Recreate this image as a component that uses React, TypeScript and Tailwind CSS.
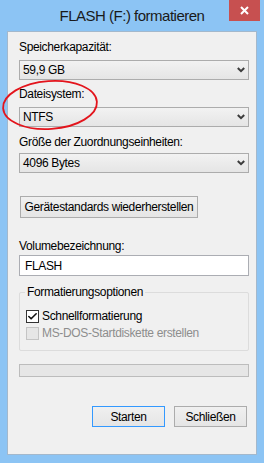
import { Check } from "lucide-react";

const font = { fontFamily: '"Liberation Sans", Arial, sans-serif' };

const Chevron = () => (
  <svg width="8" height="6" viewBox="0 0 8 6" className="shrink-0">
    <polyline points="0.8,1 4,4.2 7.2,1" fill="none" stroke="#3c3c3c" strokeWidth="2" />
  </svg>
);

type ComboProps = { value: string };

const Combo = ({ value }: ComboProps) => (
  <div className="flex h-[20px] items-center justify-between border border-[#acacac] bg-gradient-to-b from-[#f2f2f2] to-[#e5e5e5] pl-[3px] pr-[3px]">
    <span className="whitespace-nowrap text-[12px] leading-none text-black">{value}</span>
    <Chevron />
  </div>
);

const Label = ({ children, className }: { children: string; className?: string }) => (
  <div className={"h-[15px] whitespace-nowrap text-[12px] leading-[15px] text-black " + (className ?? "")}>{children}</div>
);

export default function App() {
  return (
    <div className="relative flex h-[463px] w-[264px] flex-col bg-[#8cc4f4] tracking-[-0.35px]" style={font}>
      {/* title bar */}
      <div className="relative flex h-[31px] shrink-0 items-center justify-center">
        <span className="whitespace-nowrap pb-[1px] text-[15px] leading-none tracking-[-0.5px] text-[#1a1a1a]">FLASH (F:) formatieren</span>
        <div className="absolute right-[4px] top-0 flex h-[21px] w-[31px] items-center justify-center bg-[#c75050]">
          <svg width="9" height="9" viewBox="0 0 9 9">
            <path d="M1 1L8 8M8 1L1 8" stroke="#fff" strokeWidth="2" />
          </svg>
        </div>
      </div>

      {/* client area */}
      <div className="mx-[7px] flex h-[424px] flex-col border border-[#a3b8cc] bg-[#f0f0f0] pl-[11px] pr-[7px]">
        <Label className="mt-[8px]">Speicherkapazität:</Label>
        <div className="mt-[5px]">
          <Combo value="59,9 GB" />
        </div>
        <Label className="mt-[7px]">Dateisystem:</Label>
        <div className="mt-[5px]">
          <Combo value="NTFS" />
        </div>
        <Label className="mt-[8px]">Größe der Zuordnungseinheiten:</Label>
        <div className="mt-[3px]">
          <Combo value="4096 Bytes" />
        </div>

        <div className="mt-[23px] flex">
          <button className="ml-[1px] flex h-[22px] w-[178px] items-center justify-center whitespace-nowrap border border-[#acacac] bg-gradient-to-b from-[#f0f0f0] to-[#e5e5e5] text-[12px] leading-none text-black">
            Gerätestandards wiederherstellen
          </button>
        </div>

        <Label className="mt-[21px]">Volumebezeichnung:</Label>
        <div className="mt-[1px] flex h-[21px] items-center border border-[#abadb3] bg-white pl-[5px] text-[12px] leading-none text-black">
          FLASH
        </div>

        {/* group box */}
        <div className="relative mt-[16px] h-[59px] rounded-[2px] border border-[#dcdcdc] pl-[6px] pt-[16px]">
          <span className="absolute -top-[8px] left-[5px] whitespace-nowrap bg-[#f0f0f0] px-[2px] text-[12px] leading-[15px] text-black">
            Formatierungsoptionen
          </span>
          <div className="flex h-[14px] items-center gap-[3px]">
            <div className="flex h-[13px] w-[13px] items-center justify-center border border-[#333] bg-white">
              <Check size={11} strokeWidth={3.5} color="#111" />
            </div>
            <span className="whitespace-nowrap text-[12px] leading-none text-black">Schnellformatierung</span>
          </div>
          <div className="mt-[3px] flex h-[14px] items-center gap-[3px]">
            <div className="h-[13px] w-[13px] border border-[#c4c4c4] bg-[#e6e6e6]" />
            <span className="whitespace-nowrap text-[12px] leading-none text-[#8d8d8d]">MS-DOS-Startdiskette erstellen</span>
          </div>
        </div>

        <div className="mt-[13px] h-[13px] border border-[#bcbcbc] bg-[#e6e6e6]" />

        <div className="mt-[29px] flex justify-end gap-[9px] pr-[2px]">
          <button className="flex h-[21px] w-[73px] items-center justify-center border border-[#3399ff] bg-gradient-to-b from-[#f0f0f0] to-[#e5e5e5] text-[12px] leading-none text-black">
            Starten
          </button>
          <button className="flex h-[21px] w-[73px] items-center justify-center border border-[#acacac] bg-gradient-to-b from-[#f0f0f0] to-[#e5e5e5] text-[12px] leading-none text-black">
            Schließen
          </button>
        </div>
      </div>

      {/* red annotation ellipse */}
      <svg className="pointer-events-none absolute left-0 top-0" width="264" height="463">
        <ellipse cx="50" cy="105" rx="47" ry="24" fill="none" stroke="#e3141c" strokeWidth="1.8" transform="rotate(-4 50 105)" />
      </svg>
    </div>
  );
}
